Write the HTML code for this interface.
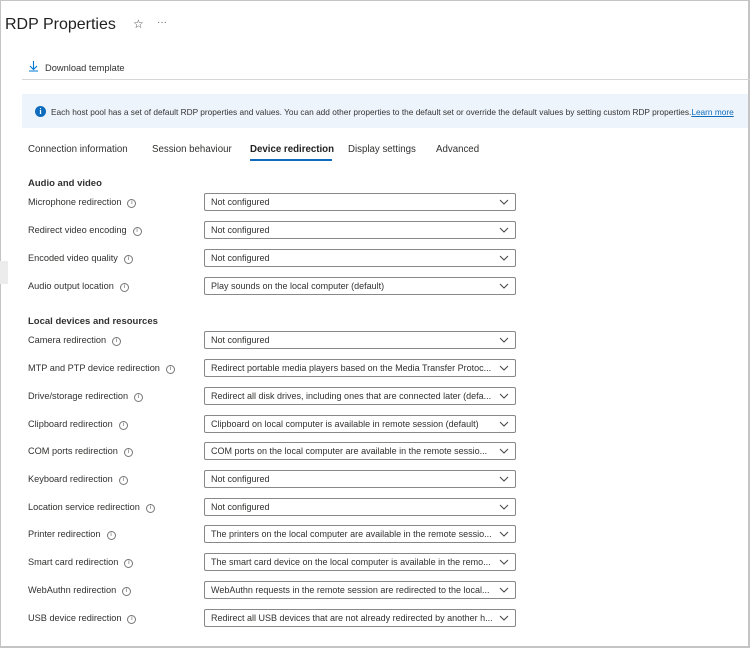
<!DOCTYPE html>
<html><head><style>
*{margin:0;padding:0;box-sizing:border-box}
body{width:750px;height:648px;background:#fff;font-family:"Liberation Sans",sans-serif;color:#323130;position:relative;overflow:hidden}
.frame{position:absolute;left:0;top:0;width:750px;height:648px;border:1px solid #c4c4c4;border-right:2px solid #c4c4c4;border-bottom:2px solid #c4c4c4}
.a{position:absolute;white-space:nowrap}
.lbl{position:absolute;left:28px;font-size:9.2px;line-height:12px}
.i{display:inline-block;width:9px;height:9px;border:1px solid #777;border-radius:50%;font-size:6px;line-height:7px;text-align:center;color:#555;margin-left:6px;vertical-align:1px}
.dd{position:absolute;left:204px;width:312px;height:18px;border:1px solid #8a8886;border-radius:2px;font-size:9px;line-height:16px;padding-left:6px}
.dd span{display:block;width:288px;overflow:hidden;white-space:nowrap}
.dd svg{position:absolute;right:6px;top:5px}
.h{position:absolute;left:28px;font-size:9.5px;font-weight:bold;line-height:12px}
.tab{position:absolute;top:144px;font-size:9.7px;line-height:12px}
</style></head><body>
<div class="frame"></div>
<div class="a" style="left:5px;top:15px;font-size:16px;line-height:20px;color:#222">RDP Properties</div>
<div class="a" style="left:133px;top:17px;font-size:12px;color:#444">☆</div>
<div class="a" style="left:157px;top:17px;font-size:10px;color:#666">···</div>
<svg class="a" style="left:28px;top:60px" width="11" height="12" viewBox="0 0 11 12"><path d="M5.5 1v8M2 6l3.5 3.5L9 6M1 11h9" stroke="#0078d4" stroke-width="1.1" fill="none"/></svg>
<div class="a" style="left:45px;top:62px;font-size:9.3px;line-height:12px">Download template</div>
<div class="a" style="left:22px;top:79px;width:728px;height:1px;background:#d6d6d6"></div>
<div class="a" style="left:22px;top:94px;width:726px;height:34px;background:#eef4fb"></div>
<div class="a" style="left:35px;top:106px;width:11px;height:11px;border-radius:50%;background:#0f6cbd;color:#fff;font-size:8px;line-height:11px;text-align:center;font-weight:bold;font-family:'Liberation Serif',serif">i</div>
<div class="a" style="left:51px;top:106px;font-size:8.3px;line-height:12px;color:#333">Each host pool has a set of default RDP properties and values. You can add other properties to the default set or override the default values by setting custom RDP properties.<span style="color:#0f6cbd;text-decoration:underline">Learn more</span></div>
<div class="tab" style="left:28px">Connection information</div>
<div class="tab" style="left:152px">Session behaviour</div>
<div class="tab" style="left:250px;font-weight:bold;color:#222">Device redirection</div>
<div class="a" style="left:250px;top:159px;width:82px;height:2px;background:#0f6cbd"></div>
<div class="tab" style="left:348px">Display settings</div>
<div class="tab" style="left:436px">Advanced</div>
<div class="a" style="left:0;top:261px;width:8px;height:23px;background:#ececec"></div>
<div class="h" style="top:178px">Audio and video</div>
<div class="h" style="top:316px">Local devices and resources</div>

<div class="lbl" style="top:196px">Microphone redirection<span class="i">i</span></div>
<div class="dd" style="top:193px"><span>Not configured</span><svg width="10" height="6"><path d="M1 1l4 4 4-4" stroke="#444" fill="none"/></svg></div>
<div class="lbl" style="top:224px">Redirect video encoding<span class="i">i</span></div>
<div class="dd" style="top:221px"><span>Not configured</span><svg width="10" height="6"><path d="M1 1l4 4 4-4" stroke="#444" fill="none"/></svg></div>
<div class="lbl" style="top:252px">Encoded video quality<span class="i">i</span></div>
<div class="dd" style="top:249px"><span>Not configured</span><svg width="10" height="6"><path d="M1 1l4 4 4-4" stroke="#444" fill="none"/></svg></div>
<div class="lbl" style="top:280px">Audio output location<span class="i">i</span></div>
<div class="dd" style="top:277px"><span>Play sounds on the local computer (default)</span><svg width="10" height="6"><path d="M1 1l4 4 4-4" stroke="#444" fill="none"/></svg></div>

<div class="lbl" style="top:334px">Camera redirection<span class="i">i</span></div>
<div class="dd" style="top:331px"><span>Not configured</span><svg width="10" height="6"><path d="M1 1l4 4 4-4" stroke="#444" fill="none"/></svg></div>
<div class="lbl" style="top:362px">MTP and PTP device redirection<span class="i">i</span></div>
<div class="dd" style="top:359px"><span>Redirect portable media players based on the Media Transfer Protoc...</span><svg width="10" height="6"><path d="M1 1l4 4 4-4" stroke="#444" fill="none"/></svg></div>
<div class="lbl" style="top:390px">Drive/storage redirection<span class="i">i</span></div>
<div class="dd" style="top:387px"><span>Redirect all disk drives, including ones that are connected later (defa...</span><svg width="10" height="6"><path d="M1 1l4 4 4-4" stroke="#444" fill="none"/></svg></div>
<div class="lbl" style="top:418px">Clipboard redirection<span class="i">i</span></div>
<div class="dd" style="top:415px"><span>Clipboard on local computer is available in remote session (default)</span><svg width="10" height="6"><path d="M1 1l4 4 4-4" stroke="#444" fill="none"/></svg></div>
<div class="lbl" style="top:445px">COM ports redirection<span class="i">i</span></div>
<div class="dd" style="top:442px"><span>COM ports on the local computer are available in the remote sessio...</span><svg width="10" height="6"><path d="M1 1l4 4 4-4" stroke="#444" fill="none"/></svg></div>
<div class="lbl" style="top:473px">Keyboard redirection<span class="i">i</span></div>
<div class="dd" style="top:470px"><span>Not configured</span><svg width="10" height="6"><path d="M1 1l4 4 4-4" stroke="#444" fill="none"/></svg></div>
<div class="lbl" style="top:501px">Location service redirection<span class="i">i</span></div>
<div class="dd" style="top:498px"><span>Not configured</span><svg width="10" height="6"><path d="M1 1l4 4 4-4" stroke="#444" fill="none"/></svg></div>
<div class="lbl" style="top:528px">Printer redirection<span class="i">i</span></div>
<div class="dd" style="top:525px"><span>The printers on the local computer are available in the remote sessio...</span><svg width="10" height="6"><path d="M1 1l4 4 4-4" stroke="#444" fill="none"/></svg></div>
<div class="lbl" style="top:556px">Smart card redirection<span class="i">i</span></div>
<div class="dd" style="top:553px"><span>The smart card device on the local computer is available in the remo...</span><svg width="10" height="6"><path d="M1 1l4 4 4-4" stroke="#444" fill="none"/></svg></div>
<div class="lbl" style="top:584px">WebAuthn redirection<span class="i">i</span></div>
<div class="dd" style="top:581px"><span>WebAuthn requests in the remote session are redirected to the local...</span><svg width="10" height="6"><path d="M1 1l4 4 4-4" stroke="#444" fill="none"/></svg></div>
<div class="lbl" style="top:612px">USB device redirection<span class="i">i</span></div>
<div class="dd" style="top:609px"><span>Redirect all USB devices that are not already redirected by another h...</span><svg width="10" height="6"><path d="M1 1l4 4 4-4" stroke="#444" fill="none"/></svg></div>
</body></html>
